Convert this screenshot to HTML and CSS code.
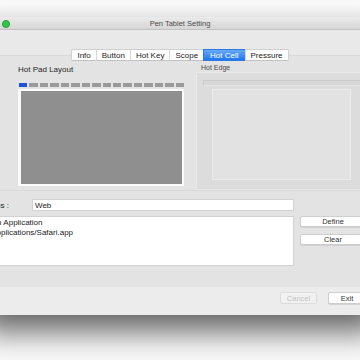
FILE: index.html
```html
<!DOCTYPE html>
<html lang="en">
<head>
    <meta charset="UTF-8">
    <meta name="viewport" content="width=device-width, initial-scale=1.0">
    <title>Pen Tablet Setting</title>
    <link rel="stylesheet" href="styles.css">
</head>
<body>
    <div class="window">
        <div class="titlebar">
            <span class="light"></span>
            <span class="title">Pen Tablet Setting</span>
        </div>
        <div class="main">
            <ul class="tabs">
                <li>Info</li>
                <li>Button</li>
                <li>Hot Key</li>
                <li>Scope</li>
                <li class="active">Hot Cell</li>
                <li>Pressure</li>
            </ul>
            <section class="tabbox">
                <div class="pad-panel">
                    <h2>Hot Pad Layout</h2>
                    <div class="cells">
                        <span class="on"></span><span></span><span></span><span></span>
                        <span></span><span></span><span></span><span></span>
                        <span></span><span></span><span></span><span></span>
                        <span></span><span></span><span></span><span></span>
                    </div>
                    <div class="pad"></div>
                </div>
                <div class="edge-panel">
                    <h3>Hot Edge</h3>
                    <div class="edge-box">
                        <div class="edge-bar"></div>
                        <div class="edge-area"></div>
                    </div>
                </div>
            </section>
            <div class="field-row">
                <label><span>Applications :</span></label>
                <div class="input">Web</div>
            </div>
            <div class="action-row">
                <div class="textarea">
                    <div>Open Application</div>
                    <div class="path">/Applications/Safari.app</div>
                </div>
                <div class="side-buttons">
                    <button>Define</button>
                    <button>Clear</button>
                </div>
            </div>
        </div>
        <div class="footer">
            <button class="disabled">Cancel</button>
            <button>Exit</button>
        </div>
    </div>
</body>
</html>
```

FILE: styles.css
```css
html, body {
margin: 0;
padding: 0;
}

body {
background: #fbfbfb;
font-family: "Liberation Sans", Arial, sans-serif;
font-size: 8px;
color: #222;
overflow: hidden;
height: 360px;
}

.window {
width: 400px;
margin: 17px 0 0 -20px;
background: #e3e3e3;
box-shadow: 0 16px 30px rgba(0, 0, 0, 0.62);
}

.titlebar {
height: 12px;
border-bottom: 1px solid #c2c2c2;
background: linear-gradient(#ebebeb, #d6d6d6);
display: flex;
align-items: center;
justify-content: center;
position: relative;
}

.titlebar .light {
position: absolute;
left: 22px;
top: 3px;
width: 6px;
height: 6px;
border-radius: 50%;
background: #30c543;
border: 0.5px solid #22a133;
}

.title {
font-size: 7.5px;
color: #4a4a4a;
}

.main {
height: 257px;
padding-top: 19px;
box-sizing: border-box;
background: linear-gradient(#e9e9e9 0, #e9e9e9 25px, #e3e3e3 25px);
}

.tabs {
list-style: none;
margin: 0 0 -6px;
padding: 0;
display: flex;
justify-content: center;
height: 12px;
position: relative;
z-index: 1;
}

.tabs li {
height: 12px;
line-height: 11px;
padding: 0 5px;
background: #fff;
border-top: 1px solid #cfcfcf;
border-bottom: 1px solid #c2c2c2;
border-left: 1px solid #d6d6d6;
box-sizing: border-box;
}

.tabs li:first-child {
border-left: 1px solid #cfcfcf;
border-radius: 2px 0 0 2px;
}

.tabs li:last-child {
border-right: 1px solid #cfcfcf;
border-radius: 0 2px 2px 0;
}

.tabs li.active {
background: linear-gradient(#69aaf8, #1f76f1);
color: #fff;
border-color: #2c78e4;
padding: 0 6px;
}

.tabbox {
margin: 0 8px;
height: 136px;
box-sizing: border-box;
border: 1px solid #d9d9d9;
background: #e3e3e3;
padding: 9px 0 0 29px;
display: flex;
gap: 12px;
}

.pad-panel {
width: 166px;
}

h2 {
margin: 0;
font-size: 8px;
font-weight: normal;
line-height: 10px;
color: #262626;
}

.cells {
margin: 8px 0 0 1px;
display: grid;
grid-template-columns: repeat(16, 1fr);
gap: 2px;
height: 4px;
width: 165px;
}

.cells span {
background: #9a9a9a;
}

.cells span.on {
background: #1f52dc;
}

.pad {
margin-top: 2px;
height: 97px;
box-sizing: border-box;
border: 2px solid #fbfbfb;
border-left-width: 3px;
background: #8f8f8f;
}

.edge-panel {
margin-top: -1px;
}

h3 {
margin: 0 0 0 5px;
font-size: 7px;
font-weight: normal;
line-height: 8px;
color: #4a4a4a;
}

.edge-box {
width: 172px;
height: 118px;
box-sizing: border-box;
border: 1px solid #e9e9e9;
background: #dcdcdc;
padding: 7px 0 0 6px;
}

.edge-bar {
height: 6px;
box-sizing: border-box;
border: 1px solid #c9c9c9;
border-bottom-color: #e6e6e6;
background: #d7d7d7;
}

.edge-area {
margin: 3px 0 0 9px;
width: 139px;
height: 91px;
box-sizing: border-box;
border: 1px solid #ececec;
background: #e2e2e2;
}

.field-row {
margin-top: 8px;
display: flex;
align-items: center;
height: 12px;
}

.field-row label {
width: 29px;
padding-right: 23px;
display: flex;
justify-content: flex-end;
}

.field-row label span {
flex-shrink: 0;
white-space: nowrap;
}

.input {
width: 262px;
height: 12px;
line-height: 12px;
box-sizing: border-box;
padding-left: 2px;
background: #fff;
border: 1px solid #d2d2d2;
}

.action-row {
margin-top: 5px;
display: flex;
gap: 6px;
}

.textarea {
margin-left: -2px;
width: 316px;
height: 50px;
box-sizing: border-box;
padding: 1px 0 0 3px;
background: #fff;
border: 1px solid #d2d2d2;
line-height: 10px;
}

.textarea .path {
padding-left: 7px;
}

.side-buttons {
display: flex;
flex-direction: column;
gap: 7px;
}

button {
font: inherit;
font-size: 7.5px;
color: #333;
margin: 0;
padding: 0;
width: 66px;
height: 11px;
line-height: 9px;
background: #fff;
border: 1px solid #cdcdcd;
border-radius: 2px;
box-shadow: 0 0.5px 0 #bdbdbd;
}

.footer {
height: 28px;
box-sizing: border-box;
background: #ececec;
display: flex;
justify-content: flex-end;
align-items: flex-start;
gap: 11px;
padding: 5px 14px 0 0;
}

.footer button {
width: 38px;
height: 12px;
}

.footer button.disabled {
width: 37px;
color: #c2c2c2;
background: #f1f1f1;
border-color: #dcdcdc;
box-shadow: none;
}
```
